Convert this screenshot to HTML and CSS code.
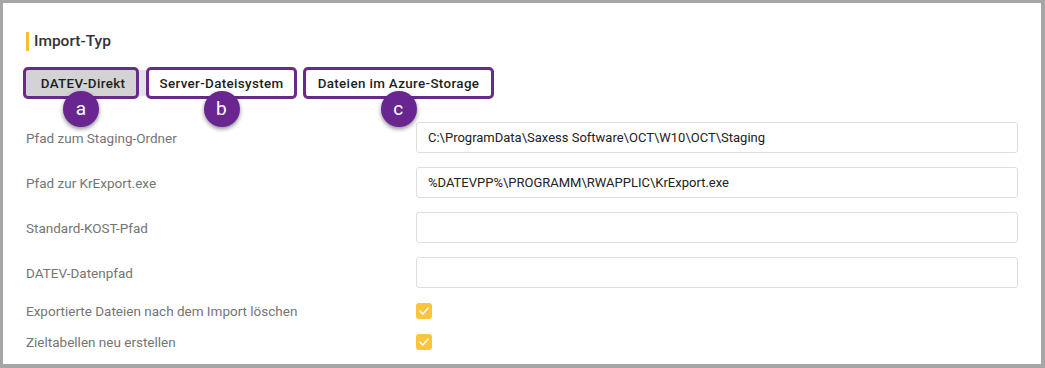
FILE: index.html
```html
<!DOCTYPE html>
<html lang="de">
<head>
    <meta charset="UTF-8">
    <title>Import-Typ</title>
    <link rel="stylesheet" href="styles.css">
</head>
<body>
    <div class="frame">
        <h2 class="section-title">Import-Typ</h2>

        <div class="type-group">
            <button class="type-btn active">DATEV-Direkt<span class="badge">a</span></button>
            <span class="group-gap"></span>
            <button class="type-btn wide">Server-Dateisystem<span class="badge">b</span></button>
            <button class="type-btn wider">Dateien im Azure-Storage<span class="badge">c</span></button>
        </div>

        <div class="form">
            <label class="field-label">Pfad zum Staging-Ordner</label>
            <input class="field-input" type="text" value="C:\ProgramData\Saxess Software\OCT\W10\OCT\Staging">

            <label class="field-label">Pfad zur KrExport.exe</label>
            <input class="field-input" type="text" value="%DATEVPP%\PROGRAMM\RWAPPLIC\KrExport.exe">

            <label class="field-label">Standard-KOST-Pfad</label>
            <input class="field-input" type="text" value="">

            <label class="field-label">DATEV-Datenpfad</label>
            <input class="field-input" type="text" value="">

            <label class="field-label">Exportierte Dateien nach dem Import löschen</label>
            <div class="check-cell">
                <span class="checkbox">
                    <svg width="12" height="12" viewBox="0 0 12 12"><path d="M2 6.2 L4.8 9 L10 3.2" fill="none" stroke="#fff" stroke-width="1.6" stroke-linecap="round" stroke-linejoin="round"/></svg>
                </span>
            </div>

            <label class="field-label">Zieltabellen neu erstellen</label>
            <div class="check-cell">
                <span class="checkbox">
                    <svg width="12" height="12" viewBox="0 0 12 12"><path d="M2 6.2 L4.8 9 L10 3.2" fill="none" stroke="#fff" stroke-width="1.6" stroke-linecap="round" stroke-linejoin="round"/></svg>
                </span>
            </div>
        </div>
    </div>
</body>
</html>
```

FILE: styles.css
```css
html, body {
    margin: 0;
    padding: 0;
}
body {
    font-family: Roboto, "Liberation Sans", sans-serif;
    background: #a6a6a6;
}
.frame {
    box-sizing: border-box;
    width: 1045px;
    height: 368px;
    border: 3px solid #a6a6a6;
    border-right-width: 4px;
    border-bottom-width: 4px;
    background: #fff;
    padding: 29px 0 0 20px;
}
.section-title {
    margin: 0 0 16px 3px;
    padding-left: 5px;
    border-left: 3px solid #fbbf2d;
    font-size: 15.5px;
    font-weight: 500;
    line-height: 19px;
    color: #333;
}
.type-group {
    display: flex;
    align-items: stretch;
    height: 32px;
}
.type-btn {
    position: relative;
    box-sizing: border-box;
    width: 116px;
    height: 32px;
    padding: 0 0 0 4px;
    border: 3px solid #6a2a8c;
    border-radius: 5px;
    background: #fff;
    font-family: inherit;
    font-size: 13.4px;
    font-weight: 500;
    letter-spacing: 0.35px;
    color: #1e1e1e;
    cursor: pointer;
}
.type-btn.active {
    background: #d3d3d3;
}
.type-btn.wide {
    width: 151px;
    padding: 0;
    margin-right: 6px;
}
.type-btn.wider {
    width: 191px;
    padding: 0;
}
.group-gap {
    width: 7px;
    background: linear-gradient(#fff 3px, #e4e4e4 3px, #e4e4e4 29px, #fff 29px);
}
.badge {
    position: absolute;
    left: 50%;
    top: 21px;
    width: 36px;
    height: 36px;
    margin-left: -18px;
    border-radius: 50%;
    background: #6a2690;
    box-shadow: 0 2px 4px rgba(0,0,0,0.45);
    color: #fff;
    font-size: 19px;
    font-weight: 400;
    line-height: 35px;
    text-align: center;
    z-index: 2;
}
.form {
    display: grid;
    grid-template-columns: 390px 602px;
    grid-template-rows: repeat(4, 31px) 17px 17px;
    row-gap: 14px;
    margin: 23px 0 0 3px;
    align-items: center;
}
.field-label {
    font-size: 13.5px;
    color: #757575;
}
.field-input {
    box-sizing: border-box;
    height: 31px;
    width: 602px;
    border: 1px solid #dedede;
    border-radius: 3px;
    padding: 0 11px;
    font-family: inherit;
    font-size: 13px;
    color: #222;
    outline: none;
}
.check-cell {
    display: flex;
    align-items: center;
}
.checkbox {
    width: 16px;
    height: 16px;
    border-radius: 3px;
    background: #fdc43c;
    display: flex;
    align-items: center;
    justify-content: center;
}
```
